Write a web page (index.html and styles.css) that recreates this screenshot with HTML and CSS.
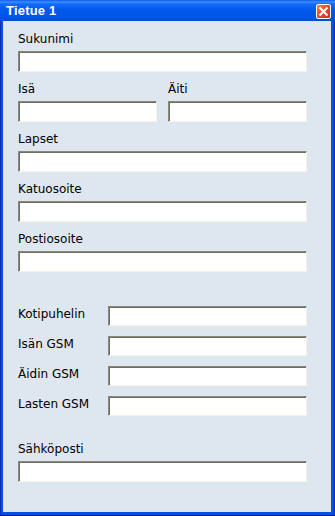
FILE: index.html
```html
<!DOCTYPE html>
<html lang="fi">
  <head>
    <meta charset="UTF-8" />
    <meta name="viewport" content="width=device-width, initial-scale=1.0" />
    <title>Tietue 1</title>
    <link rel="stylesheet" href="styles.css">
  </head>
  <body>
    <main class="window">
      <header class="titlebar">
        <span class="title">Tietue 1</span>
        <a href="javascript:void(0);" class="close">
          <svg width="14" height="14" viewBox="0 0 14 14">
            <path d="M4 4 L10 10 M10 4 L4 10" stroke="#fff" stroke-width="2" stroke-linecap="square" />
          </svg>
        </a>
      </header>
      <form class="content">
        <div class="field">
          <label>Sukunimi</label>
          <input type="text" />
        </div>
        <div class="pair">
          <div class="field">
            <label>Isä</label>
            <input type="text" />
          </div>
          <div class="field">
            <label>Äiti</label>
            <input type="text" />
          </div>
        </div>
        <div class="field">
          <label>Lapset</label>
          <input type="text" />
        </div>
        <div class="field">
          <label>Katuosoite</label>
          <input type="text" />
        </div>
        <div class="field">
          <label>Postiosoite</label>
          <input type="text" />
        </div>

        <div class="phones">
          <label>Kotipuhelin</label>
          <input type="text" />
          <label>Isän GSM</label>
          <input type="text" />
          <label>Äidin GSM</label>
          <input type="text" />
          <label>Lasten GSM</label>
          <input type="text" />
        </div>

        <div class="field">
          <label>Sähköposti</label>
          <input type="text" />
        </div>
      </form>
    </main>
  </body>
</html>
```

FILE: styles.css
```css
body {
  margin: 0;
  font-family: "DejaVu Sans", Verdana, sans-serif;
}
.window {
  display: flex;
  flex-direction: column;
  box-sizing: border-box;
  width: 335px;
  height: 516px;
  background-color: #0850e0;
  border: 1px solid #0831b8;
  border-top: none;
  border-bottom-color: #00169c;
}
.titlebar {
  display: flex;
  align-items: center;
  justify-content: space-between;
  height: 21px;
  margin: 0 -1px;
  padding: 0 4px 0 6px;
  background: linear-gradient(#0a5cf0 0, #3c8dff 2px, #136cf8 4px, #0058ea 10px, #0054e3 17px, #004bd6 21px);
}
.title {
  color: white;
  font-family: "Liberation Sans", Arial, sans-serif;
  font-weight: bold;
  font-size: 13px;
  letter-spacing: 0.2px;
  line-height: 21px;
}
.close {
  display: block;
  box-sizing: border-box;
  width: 15px;
  height: 15px;
  margin-top: 1px;
  border: 1px solid #fff;
  border-radius: 2px;
  background: linear-gradient(135deg, #f08a5a, #e0502a 45%, #c8321a);
}
.close svg {
  display: block;
  margin: -1px;
  width: 15px;
  height: 15px;
}
.content {
  flex: 1;
  margin: 0 3px 3px 2px;
  padding: 10px 0 0 15px;
  background-color: #dee6ef;
}
label {
  display: block;
  font-size: 12px;
  line-height: 16px;
  color: black;
}
input {
  display: block;
  box-sizing: border-box;
  margin: 0;
  padding: 0 3px;
  height: 21px;
  background: white;
  border: 1px solid;
  border-color: #8a8878 #f4f1e6 #f4f1e6 #8a8878;
  box-shadow: inset 1px 1px 0 #6f6e62;
  outline: none;
}
.field {
  width: 289px;
  margin-bottom: 9px;
}
.field label {
  margin-bottom: 4px;
}
.field input {
  width: 100%;
}
.pair {
  display: flex;
  gap: 11px;
  width: 289px;
}
.pair .field {
  flex: 1;
}
.phones {
  display: grid;
  grid-template-columns: 90px 199px;
  row-gap: 10px;
  margin: 34px 0 25px;
}
.phones input {
  height: 20px;
}
```
